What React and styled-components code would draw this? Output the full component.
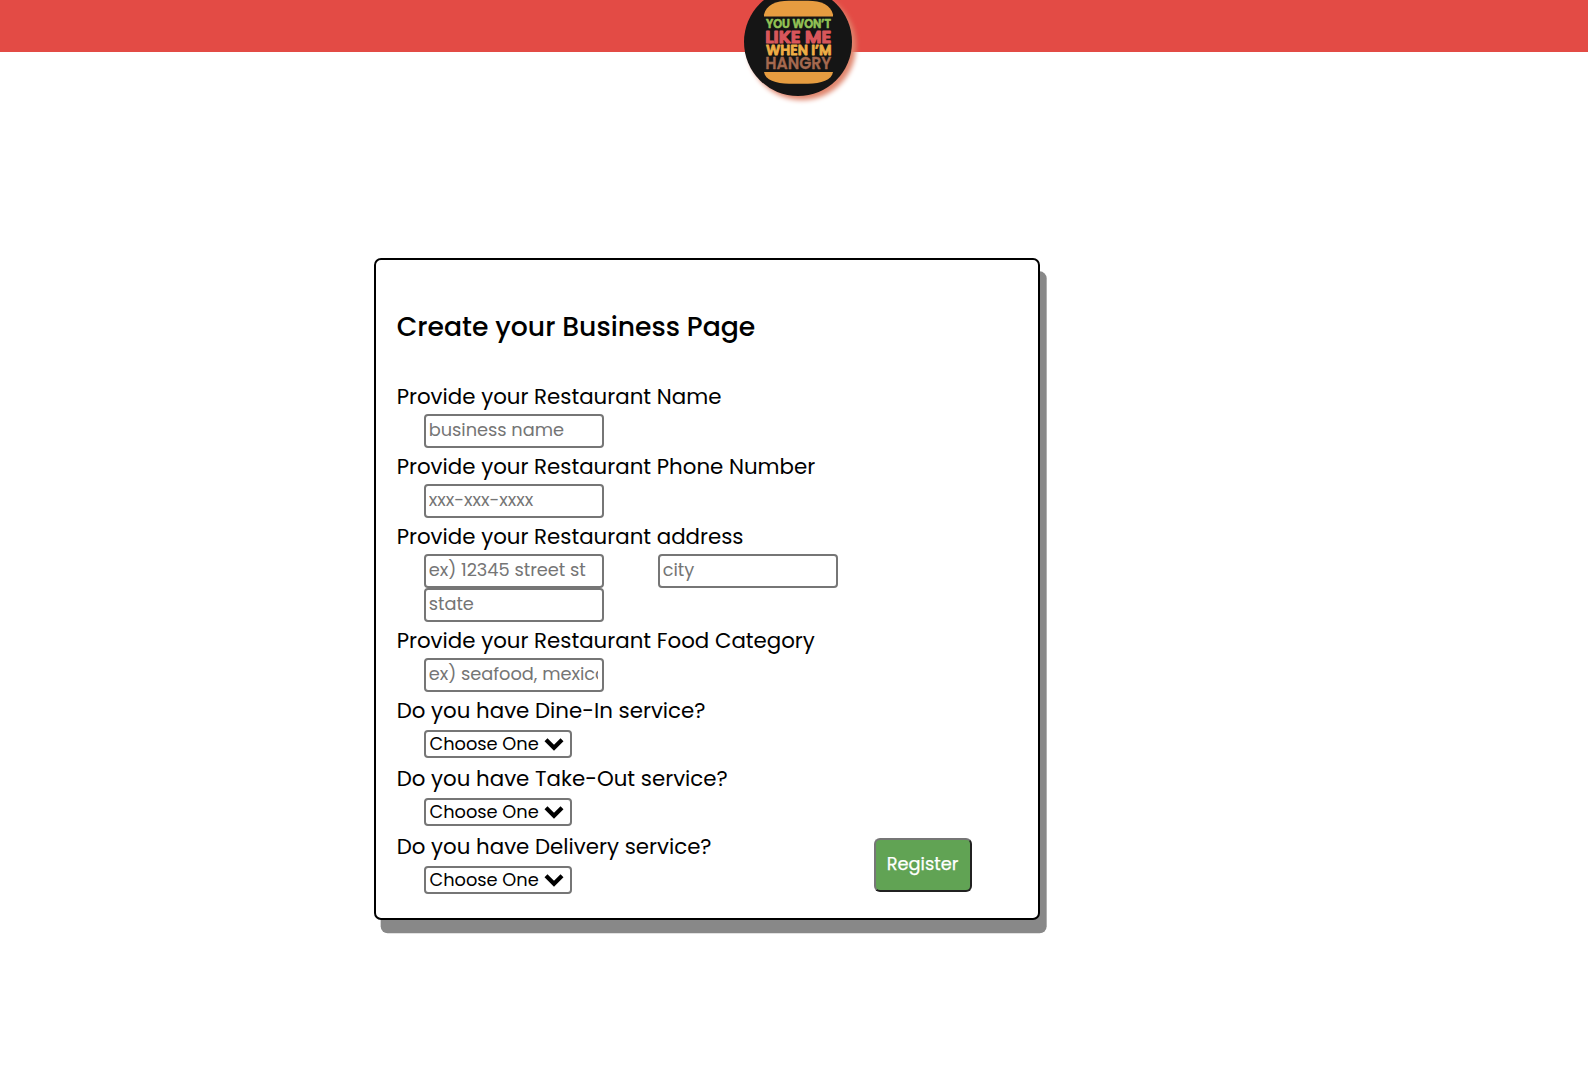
import React from "react";
import styled, { createGlobalStyle } from "styled-components";

const GlobalStyle = createGlobalStyle`
  *, *::before, *::after { box-sizing: border-box; }
  body {
    margin: 0;
    background: #fff;
    color: #000;
    font-family: Poppins, Inter, "Open Sans", sans-serif;
  }
`;

const Page = styled.div`
  display: flex;
  flex-direction: column;
  align-items: flex-start;
  min-height: 1086px;
`;

const Header = styled.header`
  display: flex;
  justify-content: center;
  width: 100%;
  height: 52px;
  background: #e34b45;
`;

const LogoBadge = styled.div`
  width: 108px;
  height: 108px;
  margin: -12px 0 0 8px;
  border-radius: 50%;
  background: #151515;
  box-shadow: 4px 4px 5px #e0866e;
`;

const LogoArt = styled.svg`
  display: block;
  width: 108px;
  height: 108px;
`;

const LogoText = styled.text`
  font-family: Poppins, Inter, sans-serif;
  font-weight: 600;
  font-size: ${(p) => p.$size}px;
  fill: ${(p) => p.$color};
  stroke: ${(p) => p.$color};
  stroke-width: ${(p) => p.$stroke ?? 0.6}px;
  stroke-linejoin: round;
`;

const Card = styled.form`
  display: flex;
  flex-direction: column;
  width: 666px;
  margin: 206px 0 0 374px;
  padding: 47px 20px 22px 20.67px;
  border: 2px solid #000;
  border-radius: 7px;
  background: #fff;
  box-shadow: 6.67px 13.33px 0 #888;
`;

const Title = styled.h1`
  margin: 0 0 31px;
  font-size: 26.67px;
  font-weight: 500;
  line-height: 40px;
`;

const Field = styled.div`
  display: flex;
  flex-direction: column;
  align-items: flex-start;
`;

const Label = styled.label`
  height: 36px;
  padding-top: 2px;
  font-size: 21.33px;
  line-height: 34px;
  white-space: nowrap;
`;

const Inputs = styled.div`
  display: flex;
  flex-wrap: wrap;
`;

const TextInput = styled.input`
  width: 180px;
  height: 34px;
  margin: 0 26.67px 0 27.33px;
  padding: 0 4px 3px 2.67px;
  border: 2px solid #767676;
  border-radius: 4px;
  background: #fff;
  font: inherit;
  font-size: 17.78px;
  outline: none;
  &::placeholder { color: #757575; opacity: 1; }
`;

const SelectBox = styled.div`
  display: grid;
  grid-template-columns: 1fr 26px;
  align-items: center;
  width: 148px;
  height: 28px;
  margin: 2px 0 2px 27.33px;
  border: 2px solid #767676;
  border-radius: 4px;
`;

const Select = styled.select`
  grid-area: 1 / 1 / 2 / 3;
  width: 100%;
  height: 24px;
  padding: 0 0 0 3.5px;
  border: 0;
  appearance: none;
  background: transparent;
  color: #000;
  font: inherit;
  font-size: 17.78px;
  line-height: 24px;
  outline: none;
`;

const Chevron = styled.svg`
  grid-area: 1 / 2 / 2 / 3;
  width: 20px;
  height: 14px;
  pointer-events: none;
`;

const LastRow = styled.div`
  display: flex;
  justify-content: space-between;
  align-items: flex-end;
`;

const Register = styled.button`
  width: 98px;
  height: 54px;
  margin: 0 46px 4px 0;
  padding: 0 1px 3px 0;
  border: 2px solid;
  border-color: #767676 #212121 #212121 #767676;
  border-radius: 6px;
  background: #61a354;
  color: #fff;
  font: inherit;
  font-size: 17.78px;
  -webkit-text-stroke: 0.25px #fff;
`;

const textFields = [
  { label: "Provide your Restaurant Name", inputs: ["business name"] },
  { label: "Provide your Restaurant Phone Number", inputs: ["xxx-xxx-xxxx"] },
  { label: "Provide your Restaurant address", inputs: ["ex) 12345 street st", "city", "state"] },
  { label: "Provide your Restaurant Food Category", inputs: ["ex) seafood, mexican"] },
];

function Choice({ label }) {
  return (
    <Field>
      <Label>{label}</Label>
      <SelectBox>
        <Select defaultValue="">
          <option value="">Choose One</option>
        </Select>
        <Chevron viewBox="0 0 20 14">
          <path d="M2 2.8 10 10.8 18 2.8" fill="none" stroke="#000" strokeWidth="4.2" />
        </Chevron>
      </SelectBox>
    </Field>
  );
}

function Logo() {
  return (
    <LogoBadge>
      <LogoArt viewBox="0 0 108 108">
        <path d="M20 28.6V26.5C22 17 32 12.7 45 12.7H64C77 12.7 87 17 89 26.5V28.6Z" fill="#e69c40" />
        <path d="M20 84H89C88 92 77 95.7 64 95.7H45C32 95.7 21 92 20 84Z" fill="#e69c40" />
        <LogoText x="22" y="39.8" $size={11.6} $color="#94c356" textLength="65" lengthAdjust="spacingAndGlyphs">YOU WON’T</LogoText>
        <LogoText x="21.2" y="54.7" $size={17.2} $color="#d9565b" $stroke={1.2} textLength="66" lengthAdjust="spacingAndGlyphs">LIKE ME</LogoText>
        <LogoText x="22" y="66.9" $size={13.6} $color="#efae46" $stroke={0.8} textLength="65.4" lengthAdjust="spacingAndGlyphs">WHEN I’M</LogoText>
        <LogoText x="21.2" y="80.8" $size={16.8} $color="#a5694f" $stroke={0.3} textLength="66" lengthAdjust="spacingAndGlyphs">HANGRY</LogoText>
      </LogoArt>
    </LogoBadge>
  );
}

export default function App() {
  return (
    <Page>
      <GlobalStyle />
      <Header>
        <Logo />
      </Header>
      <Card>
        <Title>Create your Business Page</Title>
        {textFields.map((field) => (
          <Field key={field.label}>
            <Label>{field.label}</Label>
            <Inputs>
              {field.inputs.map((placeholder) => (
                <TextInput key={placeholder} placeholder={placeholder} />
              ))}
            </Inputs>
          </Field>
        ))}
        <Choice label="Do you have Dine-In service?" />
        <Choice label="Do you have Take-Out service?" />
        <LastRow>
          <Choice label="Do you have Delivery service?" />
          <Register type="button">Register</Register>
        </LastRow>
      </Card>
    </Page>
  );
}
